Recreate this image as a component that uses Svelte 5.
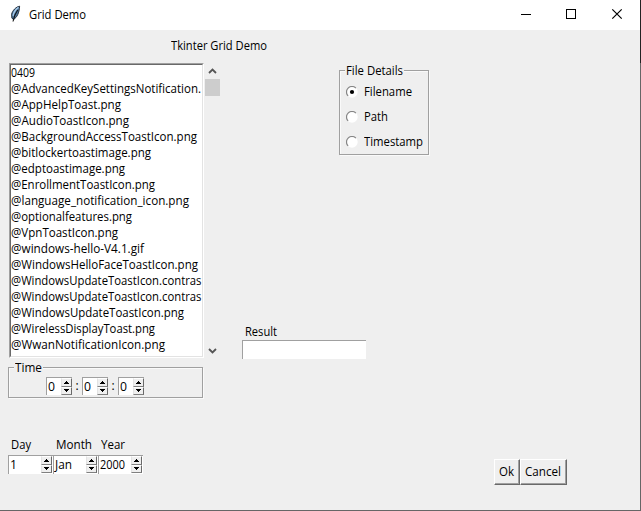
<script>
  const files = [
    ['0409', 24], ['@AdvancedKeySettingsNotification.', 190], ['@AppHelpToast.png', 110],
    ['@AudioToastIcon.png', 118], ['@BackgroundAccessToastIcon.png', 186],
    ['@bitlockertoastimage.png', 140], ['@edptoastimage.png', 114],
    ['@EnrollmentToastIcon.png', 144], ['@language_notification_icon.png', 178],
    ['@optionalfeatures.png', 121], ['@VpnToastIcon.png', 107],
    ['@windows-hello-V4.1.gif', 133], ['@WindowsHelloFaceToastIcon.png', 187],
    ['@WindowsUpdateToastIcon.contras', 190.5], ['@WindowsUpdateToastIcon.contras', 190.5],
    ['@WindowsUpdateToastIcon.png', 173], ['@WirelessDisplayToast.png', 144],
    ['@WwanNotificationIcon.png', 154]
  ];
  const options = [['Filename', 48], ['Path', 24], ['Timestamp', 59]];
  let selected = $state('Filename');

  // Condenses a label horizontally so it takes exactly its allotted width.
  function fit(node, width) {
    const natural = node.getBoundingClientRect().width;
    node.style.transform = `scaleX(${width / natural})`;
    node.style.marginRight = width - natural + 'px';
  }
</script>

{#snippet label(text, width)}<span class="label" use:fit={width}>{text}</span>{/snippet}

{#snippet spinner(value, width, kind)}
  <div class="spinner {kind}">
    <div class="value">{@render label(value, width)}</div>
    <div class="steps">
      <div class="step"><svg width="5" height="3" shape-rendering="crispEdges"><path d="M2 0h1v1h1v1h1v1H0V2h1V1h1z" /></svg></div>
      <div class="step"><svg width="5" height="3" shape-rendering="crispEdges"><path d="M0 0h5v1H4v1H3v1H2V2H1V1H0z" /></svg></div>
    </div>
  </div>
{/snippet}

<div class="window">
  <header>
    <svg class="feather" width="14" height="18" viewBox="0 0 14 18">
      <path d="M10.6 1.2C7 1.8 3.4 5.6 2.6 9.2l.3 4 1.6 1.3c3.4-2 5.8-6.5 6.1-13.3z" fill="#4f789f" stroke="#17212e" stroke-width=".9" />
      <path d="M9.5 2.4C6.6 4.4 4.7 7.4 4.1 10.8" fill="none" stroke="#a9cae8" stroke-width="1.3" />
      <path d="M8.7 5C6.2 8.4 5 11.5 4 16.5" fill="none" stroke="#111" stroke-width="1.1" />
    </svg>
    <div class="caption">{@render label('Grid Demo', 57)}</div>
    <svg class="controls" width="106" height="12" fill="none" stroke="#000">
      <path d="M1 6.5h10M46.5 1.5h9v9h-9z" shape-rendering="crispEdges" />
      <path d="M92.3 1.3l9.4 9.4m0-9.4l-9.4 9.4" stroke-width="1.2" />
    </svg>
  </header>

  <main>
    <div class="heading">{@render label('Tkinter Grid Demo', 96)}</div>
    <div class="columns">
      <div class="left">
        <div class="listrow">
          <div class="listbox">
            <div class="items">
              {#each files as [name, width]}
                <div class="item">{@render label(name, width)}</div>
              {/each}
            </div>
          </div>
          <div class="scrollbar">
            <svg width="9" height="6"><path d="M1 5l3.5-3.5L8 5" /></svg>
            <div class="thumb"></div>
            <svg class="down" width="9" height="6"><path d="M1 1l3.5 3.5L8 1" /></svg>
          </div>
        </div>
        <div class="frame time">
          <div class="legend">{@render label('Time', 27)}</div>
          <div class="clock">
            {@render spinner('0', 7, 'small')}<span class="colon">:</span>
            {@render spinner('0', 7, 'small')}<span class="colon">:</span>
            {@render spinner('0', 7, 'small')}
          </div>
        </div>
        <div class="dates">
          <div><div class="name">{@render label('Day', 20)}</div>{@render spinner('1', 7, 'wide')}</div>
          <div><div class="name">{@render label('Month', 36)}</div>{@render spinner('Jan', 17, 'wide')}</div>
          <div><div class="name">{@render label('Year', 24)}</div>{@render spinner('2000', 25, 'wide')}</div>
        </div>
      </div>

      <div class="right">
        <div class="frame details">
          <div class="legend">{@render label('File Details', 57)}</div>
          {#each options as [name, width]}
            <div class="option" role="radio" tabindex="-1" aria-checked={selected === name} onclick={() => (selected = name)} onkeydown={() => (selected = name)}>
              <svg width="12" height="12" viewBox="0 0 12 12">
                <circle cx="6" cy="6" r="5.7" fill="#fff" />
                <path d="M2.1 9.9A5.5 5.5 0 0 1 9.9 2.1" fill="none" stroke="#858585" stroke-width="1.2" />
                {#if selected === name}<circle cx="6" cy="6" r="2.1" fill="#000" />{/if}
              </svg>
              {@render label(name, width)}
            </div>
          {/each}
        </div>
        <div class="result">
          <div class="name">{@render label('Result', 32)}</div>
          <div class="entry"></div>
        </div>
        <div class="buttons">
          <div class="button ok">{@render label('Ok', 15)}</div>
          <div class="button cancel">{@render label('Cancel', 36)}</div>
        </div>
      </div>
    </div>
  </main>
</div>

<style>
  :global(body) { margin: 0; overflow: hidden; }
  .window {
    box-sizing: border-box; width: 641px; height: 511px; display: flex; flex-direction: column;
    background: #efefef; color: #000; font: 12px/16px "Open Sans", "Noto Sans", sans-serif;
    border: solid #666; border-width: 0 1px 1px 0;
    border-image: linear-gradient(#222 64px, #666 64px) 1;
  }
  svg { display: block; flex: none; }
  .label { display: inline-block; white-space: pre; transform-origin: 0 50%; }
  header { display: flex; height: 30px; background: #fff; flex: none; }
  .feather { margin: 5px 0 0 9px; }
  .caption { margin: 7px 0 0 6px; flex: 1; }
  .controls { margin: 8px 14px 0 0; }
  main { flex: 1; }
  .heading { padding: 8px 0 0 171px; height: 25px; }
  .columns { display: flex; }
  .left { width: 221px; padding-left: 8px; }
  .listrow { display: flex; padding-left: 1px; }
  .listbox {
    width: 193px; height: 293px; border: 1px solid; border-color: #a0a0a0 #fff #fff #a0a0a0;
    flex: none;
  }
  .items {
    box-sizing: border-box; width: 193px; height: 293px; overflow: hidden; background: #fff;
    border: 1px solid; border-color: #696969 #e3e3e3 #e3e3e3 #696969;
  }
  .item { height: 16px; white-space: nowrap; }
  .scrollbar { width: 15px; margin-left: 1px; display: flex; flex-direction: column; align-items: center; padding-top: 5px; }
  .scrollbar path { fill: none; stroke: #555; stroke-width: 1.8; }
  .thumb { width: 15px; height: 17px; background: #cdcdcd; margin-top: 5px; }
  .scrollbar .down { margin-top: auto; margin-bottom: 4px; }
  .frame { box-sizing: border-box; border: 1px solid #a0a0a0; box-shadow: inset 1px 1px #fafafa, 1px 1px #fafafa; }
  .legend { width: max-content; background: #efefef; height: 16px; }
  .time { width: 195px; height: 31px; margin-top: 9px; }
  .time .legend { margin: -8px 0 0 5px; padding: 0 1px; }
  .clock { display: flex; margin: 1px 0 0 37px; }
  .colon { width: 10px; text-align: center; line-height: 18px; }
  .spinner { box-sizing: border-box; display: flex; background: #fff; border: solid #a0a0a0; border-width: 1px 0 0 1px; }
  .small { width: 26px; height: 18px; }
  .wide { width: 45px; height: 19px; padding-right: 1px; }
  .value { flex: 1; padding-left: 1px; line-height: 18px; white-space: nowrap; }
  .small .value { padding-left: 1px; }
  .steps { width: 11px; height: 17px; display: flex; flex-direction: column; flex: none; }
  .step {
    box-sizing: border-box; flex: 1; display: flex; justify-content: center; align-items: center;
    background: #efefef; border: 1px solid; border-color: #fff #696969 #808080 #e3e3e3;
  }
  .dates { display: flex; margin-top: 39px; }
  .name { height: 18px; padding-left: 3px; }
  .right { flex: 1; display: flex; flex-direction: column; align-items: flex-start; padding: 7px 0 0 13px; }
  .details { width: 90px; height: 85px; margin-left: 97px; }
  .details .legend { margin: -8px 0 0 5px; padding: 0 1px; }
  .option { display: flex; align-items: center; height: 25px; padding-left: 6px; gap: 6px; }
  .result { margin-top: 169px; }
  .result .name { height: 16px; }
  .entry { box-sizing: border-box; width: 124px; height: 19px; background: #fff; border: solid #a0a0a0; border-width: 1px 0 0 1px; }
  .buttons { display: flex; margin: 100px 0 0 252px; }
  .button {
    box-sizing: border-box; height: 26px; display: flex; justify-content: center; align-items: center;
    border: 1px solid; border-color: #fff #696969 #696969 #fff; box-shadow: inset -1px -1px #a0a0a0;
    padding: 0 1px 1px 0;
  }
  .ok { width: 26px; }
  .cancel { width: 47px; }
</style>
